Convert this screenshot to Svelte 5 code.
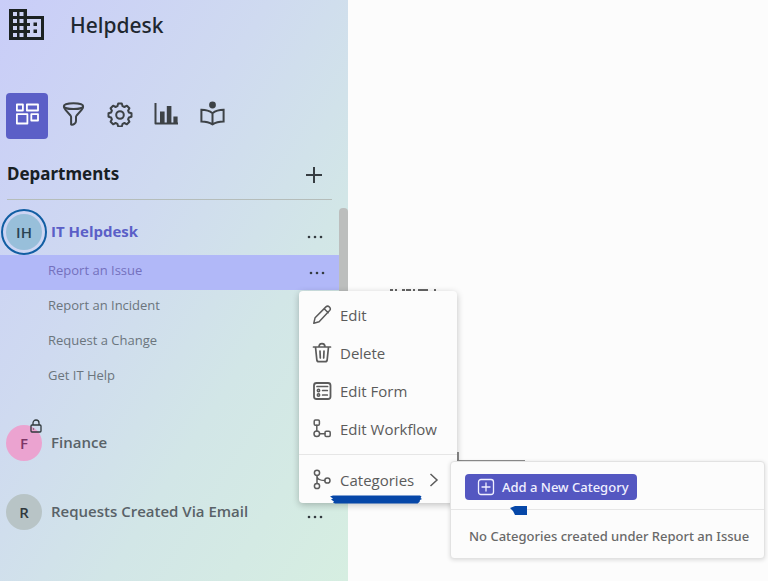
<script>
  const requestTypes = ['Report an Issue', 'Report an Incident', 'Request a Change', 'Get IT Help'];
  const tools = ['filter', 'settings', 'reports', 'guide'];
  const actions = ['Edit', 'Delete', 'Edit Form', 'Edit Workflow'];
</script>

{#snippet dots()}
  <svg width="16" height="4" viewBox="0 0 16 4" fill="currentColor" aria-hidden="true">
    <circle cx="2" cy="2" r="1.3" /><circle cx="8" cy="2" r="1.3" /><circle cx="14" cy="2" r="1.3" />
  </svg>
{/snippet}

{#snippet toolIcon(name)}
  <svg width="26" height="26" viewBox="0 0 26 26" fill="none" stroke="currentColor" stroke-width="2" stroke-linejoin="round" stroke-linecap="round" aria-hidden="true">
    {#if name === 'filter'}
      <ellipse cx="12.500" cy="5.200" rx="9.600" ry="2.900" />
      <path d="M2.900 5.600c0 1.400.7 2.200 1.600 3.200l5 5.700c.4.500.6 1 .6 1.600v7.400c2.200.6 4.900-1 4.900-3.600v-3.800c0-.6.2-1.100.6-1.600l5-5.700c.9-1 1.500-1.800 1.500-3.200" />
    {:else if name === 'settings'}
      <path d="M11.200 2.500h3.600l.8 2.700 1.800.8 2.500-1.300 2.500 2.500-1.300 2.500.8 1.800 2.600.8v3.400l-2.600.8-.8 1.800 1.300 2.500-2.500 2.500-2.500-1.300-1.800.8-.8 2.700h-3.600l-.8-2.700-1.800-.8-2.500 1.300-2.500-2.500 1.300-2.500-.8-1.800-2.600-.8v-3.400l2.600-.8.8-1.800-1.300-2.500 2.500-2.500L8.600 6l1.800-.8z" />
      <circle cx="13" cy="14" r="3.800" />
    {:else if name === 'reports'}
      <path d="M2.500 2v20.500h22.500" stroke-linecap="butt" />
      <path d="M7 10.500h4.600V22H7zM13.800 5h4.600v17h-4.600zM20.400 15.500h4.200V22h-4.200z" fill="currentColor" stroke="none" />
    {:else}
      <circle cx="13.500" cy="4" r="3.400" fill="currentColor" stroke="none" />
      <path d="M13.500 12.200C10.300 9.600 6.500 8.800 2.400 8.800v11.600c4.100 0 7.900.8 11.100 3 3.200-2.200 7-3 11.100-3V8.800c-4.100 0-7.900.8-11.100 3.400zv11" stroke-linejoin="miter" />
    {/if}
  </svg>
{/snippet}

{#snippet menuIcon(name)}
  <svg width="20" height="22" viewBox="0 0 20 22" fill="none" stroke="currentColor" stroke-width="1.500" stroke-linejoin="round" stroke-linecap="round" aria-hidden="true">
    {#if name === 'Edit'}
      <path d="M1.800 19.200l1.300-5.500L13.900 2.900c2.400-2.100 5.800 1.300 3.700 3.700L7.100 17.700zM12.200 4.700l4 4" />
    {:else if name === 'Delete'}
      <path d="M1.500 5h17M3.500 5l1.300 12.600c.1 1.400.9 2.100 2.100 2.100h6.200c1.200 0 2-.7 2.100-2.100L16.500 5M7 5c0-4.500 6-4.500 6 0M8 9l.3 7M12 9l-.3 7" stroke-width="1.700" />
    {:else if name === 'Edit Form'}
      <rect x="2" y="3" width="16.500" height="16" rx="2.500" stroke-width="1.800" />
      <path d="M5 6.500h10.600M10.600 10.500h4.700M10.600 15h4.700" stroke-width="1.700" />
      <circle cx="6.500" cy="10.500" r="1.200" /><circle cx="6.500" cy="15" r="1.200" />
    {:else if name === 'Edit Workflow'}
      <rect x="2.200" y="2" width="5.200" height="5.200" rx="1.200" />
      <circle cx="4.800" cy="15.800" r="2.800" /><rect x="13" y="13.200" width="5.200" height="5.200" rx="1.200" />
      <path d="M4.800 7.200V13M7.600 15.800H13" />
    {:else}
      <circle cx="5" cy="3.800" r="2.600" /><circle cx="5" cy="17" r="2.600" /><circle cx="15.400" cy="11.500" r="2.600" />
      <path d="M5 6.400v8M5 7.500c.5 3.200 3 4 7.800 4" />
    {/if}
  </svg>
{/snippet}

<div class="app">
  <aside>
    <header>
      <svg width="36" height="32" viewBox="0 0 36 32" aria-hidden="true">
        <path d="M0 0h18v7h17v24H0z" fill="#1c2222" />
        <path d="M4 3h4v4H4zM10.500 3h4v4h-4zM4 10h4v4H4zM10.500 10h4v4h-4zM4 17h4v4H4zM10.500 17h4v4h-4zM4 24h4v4H4zM10.500 24h4v4h-4zM18 10h14v18H18v-4h3v-3h-3v-4h3v-3h-3z" fill="#ccd2f4" />
        <path d="M24.500 13.500h3.500v3.500h-3.500zM24.500 20.500h3.500v3.500h-3.500z" fill="#1c2222" />
      </svg>
      <h1>Helpdesk</h1>
    </header>

    <nav class="tools">
      <button class="active" aria-label="Dashboard">
        <svg width="24" height="24" viewBox="0 0 24 24" fill="none" stroke="currentColor" stroke-width="1.800" stroke-linejoin="round" aria-hidden="true">
          <path d="M1.900 2.500h6v6h-6zM11.900 2.500H23v6H11.900zM1.900 12.200h10.500v9.300H1.900zM16.300 12.200H23v6.300h-6.700z" />
        </svg>
      </button>
      {#each tools as tool}
        <button aria-label={tool}>{@render toolIcon(tool)}</button>
      {/each}
    </nav>

    <div class="heading">
      <h2>Departments</h2>
      <button aria-label="Add department">
        <svg width="18" height="18" viewBox="0 0 18 18" stroke="currentColor" stroke-width="2" aria-hidden="true"><path d="M9 1v16M1 9h16" /></svg>
      </button>
    </div>

    <div class="list">
      <div class="entries">
        <div class="department current">
          <span class="avatar it">IH</span>
          <a href="#it">IT Helpdesk</a>
          <button class="more" aria-label="IT Helpdesk options">{@render dots()}</button>
        </div>
        <ul>
          {#each requestTypes as type, i}
            <li class:selected={i === 0}>
              <a href="#type">{type}</a>
              {#if i === 0}
                <button class="more" aria-label="Report an Issue options">{@render dots()}</button>
                <svg class="covered" width="50" height="3" viewBox="0 0 50 3" aria-hidden="true"><path d="M2 2h3M7 2h2M14 2h3M18 2h5M25 2h2M30 2h10M46 2h2" stroke="#333" stroke-width="1.300" /></svg>
                <svg class="frame" width="70" height="10" viewBox="0 0 70 10" fill="none" aria-hidden="true"><path d="M1 0v9h67" stroke="#8d8d8d" stroke-width="2" /></svg>
                <div class="menu" role="menu">
                  {#each actions as action}
                    <button role="menuitem">{@render menuIcon(action)}<span>{action}</span></button>
                  {/each}
                  <div class="branch">
                    <button role="menuitem" aria-expanded="true">
                      {@render menuIcon('Categories')}<span>Categories</span>
                      <svg class="chevron" width="10" height="14" viewBox="0 0 10 14" fill="none" stroke="currentColor" stroke-width="1.500" aria-hidden="true"><path d="M1.500 1l6.500 6-6.500 6" /></svg>
                    </button>
                    <svg class="marker" width="92" height="10" viewBox="0 0 92 10" aria-hidden="true"><path d="M0 1.500l3-1 87 0 1.500 1-1 1.500 1.500 1-2 1-.5 2-2 1.500H5L3 7.500l1-1-3-2 2-1z" fill="#0647a8" /></svg>
                    <div class="submenu">
                      <div class="add">
                        <button>
                          <svg width="18" height="18" viewBox="0 0 18 18" fill="none" stroke="currentColor" stroke-width="1.300" stroke-linecap="round" aria-hidden="true"><rect x="1.500" y="1.500" width="15" height="15" rx="2.500" /><path d="M9 5v8M5 9h8" /></svg>
                          Add a New Category
                        </button>
                        <svg class="stroke" width="17" height="10" viewBox="0 0 17 10" aria-hidden="true"><path d="M0 3l5-2h12v9H5L3 6z" fill="#0647a8" /></svg>
                      </div>
                      <p>No Categories created under Report an Issue</p>
                    </div>
                  </div>
                </div>
              {/if}
            </li>
          {/each}
        </ul>
        <div class="department finance">
          <span class="avatar pink">F
            <svg class="lock" width="12" height="14" viewBox="0 0 12 14" fill="none" stroke="#30383c" stroke-width="1.300" aria-hidden="true"><rect x="1" y="6" width="10" height="7" rx="1" /><path d="M3 6V4a3 3 0 0 1 6 0v2" /><path d="M3.500 9.500v1" /></svg>
          </span>
          <a href="#finance">Finance</a>
        </div>
        <div class="department requests">
          <span class="avatar grey">R</span>
          <a href="#requests">Requests Created Via Email</a>
          <button class="more" aria-label="Requests options">{@render dots()}</button>
        </div>
      </div>
      <div class="scrollbar"></div>
    </div>
  </aside>
  <main></main>
</div>

<style>
  :global(body) { margin: 0; }
  .app { display: flex; min-height: 100vh; background: #fcfcfc; font-family: "Open Sans", "Noto Sans", sans-serif; color: #5c5f62; }
  .app, .app * { box-sizing: border-box; }
  button { padding: 0; border: 0; background: none; font: inherit; color: inherit; display: flex; align-items: center; }
  a { color: inherit; text-decoration: none; }
  svg { flex: none; display: block; }
  h1, h2, p, ul { margin: 0; padding: 0; }
  aside { width: 348px; flex: none; background: linear-gradient(122deg, #c9cdf8 0%, #cfdaf0 38%, #d2e6e7 66%, #d6eee1 100%); }
  main { flex: 1; }
  h1, h2, .submenu { font-family: "Noto Sans", "Open Sans", sans-serif; }
  header { display: flex; gap: 25px; padding: 9px 9px 0; height: 93px; }
  h1 { font-size: 21px; line-height: 32px; font-weight: 500; color: #20272f; }
  .tools { display: flex; align-items: center; gap: 20px; padding-left: 6px; height: 46px; color: #3d4246; }
  .tools button { width: 26px; height: 46px; justify-content: center; padding-bottom: 4px; }
  .tools .active { width: 42px; margin-right: -7px; border-radius: 4px; background: #5b5fc7; color: #fff; }
  .heading { display: flex; justify-content: space-between; align-items: center; height: 61px; margin: 0 16px 0 7px; padding: 11px 9px 0 0; border-bottom: 1px solid #b5bdba; color: #363d42; }
  h2 { font-size: 17px; line-height: 24px; font-weight: 700; color: #182024; padding-bottom: 2px; }
  .list { display: flex; padding-top: 8px; }
  .entries { flex: 1; }
  .scrollbar { width: 9px; height: 280px; border-radius: 4px 4px 0 0; background: #bcbebd; }
  .department { display: flex; align-items: center; gap: 9px; padding: 0 16px 0 6px; height: 36px; font-size: 15px; line-height: 20px; font-weight: 600; color: #596268; }
  .department a { padding-bottom: 2px; }
  .department.current { height: 47px; color: #5b5fc7; font-weight: 700; }
  .department.finance { margin-top: 30px; }
  .department.requests { margin-top: 33px; }
  .avatar { position: relative; width: 36px; height: 36px; flex: none; border-radius: 50%; display: flex; align-items: center; justify-content: center; font-size: 15px; font-weight: 600; }
  .it { background: #98bfda; color: #294353; outline: 2px solid #115ea3; outline-offset: 3px; }
  .pink { background: #eba3d0; color: #7c3566; }
  .grey { background: #b8c4c6; color: #30383c; }
  .lock { position: absolute; right: 0; top: -6px; }
  .more { margin-left: auto; height: 16px; color: #343b40; }
  .department .more { margin-top: 10px; }
  ul { list-style: none; }
  li { position: relative; display: flex; align-items: center; height: 35px; padding: 0 14px 6px 48px; font-size: 13px; line-height: 18px; color: #6b757d; }
  li.selected { background: #b1b8f8; color: #7470bd; }
  li .more { margin-top: 6px; }
  .covered { position: absolute; left: 388px; top: 33px; }
  .frame { position: absolute; left: 457px; top: 197px; }
  .menu { position: absolute; z-index: 2; left: 299px; top: 36px; width: 158px; padding-top: 6px; background: #fcfcfc; border-radius: 4px; box-shadow: 0 2px 7px #0000003d; font-size: 15px; line-height: 20px; color: #5b5b5b; }
  .menu > button, .branch > button { width: 100%; height: 38px; gap: 8px; padding: 0 0 2px 13px; }
  .branch { position: relative; margin-top: 5px; height: 49px; padding-top: 7px; border-top: 1px solid #e6e6e6; }
  .chevron { margin-left: auto; margin-right: 18px; }
  .marker { position: absolute; left: 31px; top: 40px; }
  .submenu { position: absolute; left: 151px; top: 6px; width: 315px; background: #fcfcfc; border: 1px solid #e2e2e2; border-radius: 4px; box-shadow: 0 1px 4px #00000024; font-size: 13px; line-height: 20px; font-weight: 500; color: #696969; }
  .add { position: relative; padding: 12px 14px 9px; border-bottom: 1px solid #e6e6e6; }
  .add button { gap: 7px; height: 26px; padding: 0 8px 0 12px; border-radius: 4px; background: #5457c1; color: #f0f0ff; }
  .stroke { position: absolute; left: 59px; top: 43px; }
  .submenu p { padding: 16px 8px 12px 18px; white-space: nowrap; }
</style>
